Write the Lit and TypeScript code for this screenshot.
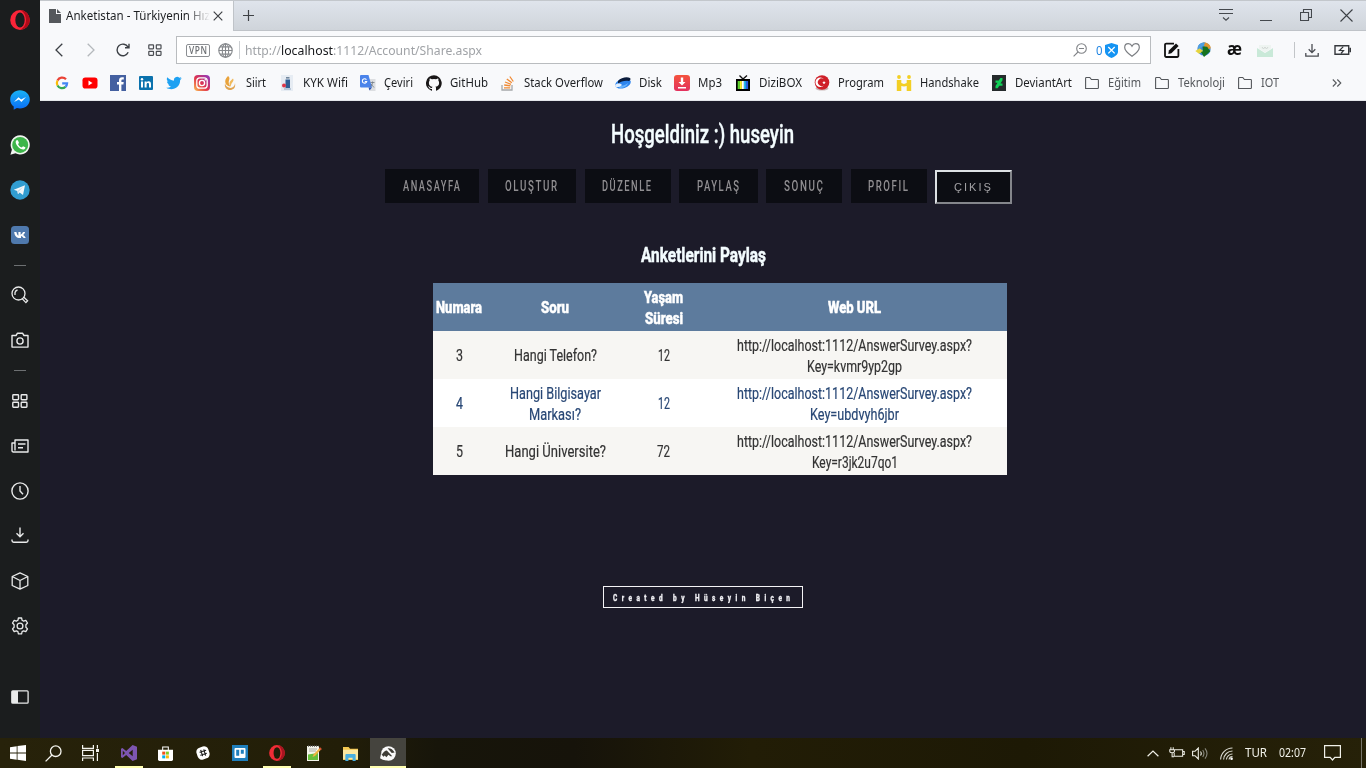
import { LitElement, html, svg, css, TemplateResult, SVGTemplateResult } from "lit";
import { customElement, property, query } from "lit/decorators.js";

type Glyph = { box: string; body: SVGTemplateResult };

const operaBody = (a: string, b: string) => svg`
  <ellipse cx="10" cy="10" rx="9.8" ry="9.9" fill=${a}/>
  <path d="M10 0.1a9.8 9.9 0 0 1 0 19.8c3-1 6-5 6-9.900s-3-9-6-9.900z" fill=${b}/>`;

const GLYPHS: Record<string, Glyph> = {
  opera: { box: "0 0 20 20", body: svg`${operaBody("#fb2438", "#b00a18")}<ellipse cx="10" cy="10" rx="4.700" ry="7.400" fill="#1b1d1e"/>` },
  operaTask: { box: "0 0 20 20", body: svg`${operaBody("#f02c36", "#a81420")}<ellipse cx="10" cy="10" rx="4.300" ry="7.300" fill="#211d08"/>` },
  messenger: { box: "0 0 20 20", body: svg`
    <defs><linearGradient id="m" x2="0" y2="1"><stop stop-color="#19b2f5"/><stop offset="1" stop-color="#0a6cf5"/></linearGradient></defs>
    <path d="M10 .3C4.500.3.200 4.300.200 9.500c0 3 1.300 5.400 3.500 7v3.300l3.200-1.700c1 .3 2 .4 3.100.4 5.500 0 9.800-4 9.800-9S15.500.3 10 .3z" fill="url(#m)"/>
    <path d="M4 12l4.500-4.800 2.600 2.400L16 7l-4.600 4.900-2.500-2.400z" fill="#fff"/>` },
  whatsapp: { box: "0 0 20 20", body: svg`
    <path d="M10.200.3A9.600 9.600 0 0 0 1.900 14.700L.4 19.700l5.100-1.400A9.600 9.600 0 1 0 10.200.3z" fill="#f1f5f0"/>
    <circle cx="10.200" cy="9.900" r="8" fill="#3db54a"/>
    <path d="M7 5c-2 1-1.600 3.600.6 6.200s5 3.900 6.700 3.100c1-.5 1.200-1.400 1-2l-2.300-1.100-1.200 1.300C10 12 8.500 10.500 8 9l1-1-1-2.600z" fill="#fff"/>` },
  telegram: { box: "0 0 20 20", body: svg`
    <circle cx="10" cy="10" r="9.700" fill="#319dd1"/>
    <path d="M3.800 9.800L15 5.300 13 15l-3.400-2.500L8 14.200l-.7-3.200z" fill="#f2f8fb"/><path d="M7.300 11l6-4.200-4.600 5L8 14.200z" fill="#c3d9e6"/>` },
  vk: { box: "0 0 18 18", body: svg`
    <rect width="18" height="18" rx="3.500" fill="#4f79ad"/>
    <path d="M2.800 6h2.200c.4 2 1.200 3.300 2 3.700V6h2.200v2.700C10 8.400 11 7.400 11.600 6h2.100c-.3 1.300-1.200 2.400-2 3 .9.500 1.900 1.400 2.700 3h-2.300c-.6-1-1.500-1.900-2.500-2V12H8.500C5.300 12 3.200 10 2.800 6z" transform="translate(.4 0)" fill="#fff"/>` },
  search: { box: "0 0 18 18", body: svg`<g fill="none" stroke="#e9eaea" stroke-width="1.300"><circle cx="7.500" cy="7.500" r="6.500"/><path d="M4 9V6.500A3.500 3.500 0 0 1 6.500 4M12.600 11l4 3.800-1.700 1.800-3.800-4"/></g>` },
  camera: { box: "0 0 18 16", body: svg`<g fill="none" stroke="#e9eaea" stroke-width="1.400"><path d="M1 3.500h4L6.500 1.200h5L13 3.500h4v11.600H1z" stroke-linejoin="round"/><circle cx="9" cy="9" r="3.100"/></g>` },
  speed: { box: "0 0 16 14", body: svg`<g fill="none" stroke="#e9eaea" stroke-width="1.400"><rect x=".8" y=".8" width="5.700" height="5" rx=".7"/><rect x="9.200" y=".8" width="5.700" height="5" rx=".7"/><rect x=".8" y="8.300" width="5.700" height="5" rx=".7"/><rect x="9.200" y="8.300" width="5.700" height="5" rx=".7"/></g>` },
  news: { box: "0 0 18 14", body: svg`<g fill="none" stroke="#e9eaea" stroke-width="1.400" stroke-linejoin="round"><path d="M4 1h13v12H2.200A1.400 1.400 0 0 1 1 11.500V4h3zM4 4v7.500M7 5h7.500M7 8.700h5"/></g>` },
  clock: { box: "0 0 18 18", body: svg`<g fill="none" stroke="#e9eaea" stroke-width="1.400"><circle cx="9" cy="9" r="8.100"/><path d="M9 4v5l3 3.300"/></g>` },
  download: { box: "0 0 18 16", body: svg`<g fill="none" stroke="#e9eaea" stroke-width="1.400"><path d="M9 .5v9.200M5.500 6.300L9 9.700l3.500-3.400M1 12.500v1q0 1.700 1.700 1.700h12.600q1.700 0 1.700-1.700v-1"/></g>` },
  cube: { box: "0 0 18 18", body: svg`<path d="M9 .9l7.800 3.600v9L9 17.200 1.200 13.500v-9zM1.200 4.500L9 8.500l7.800-4M9 8.500v8.700" fill="none" stroke="#e9eaea" stroke-width="1.300" stroke-linejoin="round"/>` },
  gear: { box: "0 0 18 18", body: svg`<g fill="none" stroke="#e9eaea" stroke-width="1.300" stroke-linejoin="round"><path d="M7.400 1h3.200l.5 2.300 1.500.8 2.200-.8 1.700 2.700-1.600 1.700v2.500l1.600 1.700-1.700 2.700-2.200-.8-1.500.8-.5 2.300H7.400l-.5-2.300-1.500-.8-2.200.8-1.700-2.700 1.600-1.700V7.700L1.500 6l1.700-2.700 2.200.8 1.500-.8z"/><circle cx="9" cy="9" r="2.900"/></g>` },
  panel: { box: "0 0 18 14", body: svg`<rect x=".8" y=".8" width="16.300" height="12.400" rx="1" fill="none" stroke="#e9eaea" stroke-width="1.300"/><path d="M1 1h6v12H1z" fill="#e9eaea"/>` },

  page: { box: "0 0 12 14", body: svg`<path d="M0 0h7v5h5v9H0z" fill="#55585c"/><path d="M8 0l4 4H8z" fill="#55585c"/>` },
  close: { box: "0 0 10 10", body: svg`<path d="M.7.7l8.600 8.600M9.300.7L.7 9.300" stroke="#3e4145" stroke-width="1.200"/>` },
  plus: { box: "0 0 11 11", body: svg`<path d="M5.500 0v11M0 5.500h11" stroke="#3e4145" stroke-width="1.200"/>` },
  tabMenu: { box: "0 0 14 12", body: svg`<path d="M0 .5h14M0 4.500h14M4 8.500l3 2.700 3-2.700" fill="none" stroke="#44484d" stroke-width="1.100"/>` },
  minimise: { box: "0 0 12 12", body: svg`<path d="M0 11.500h12" stroke="#44484d"/>` },
  restore: { box: "0 0 12 12", body: svg`<path d="M.5 3.500h8v8h-8zM3.500 3V.5h8v8H9" fill="none" stroke="#44484d" stroke-width="1.100"/>` },
  winClose: { box: "0 0 13 13", body: svg`<path d="M.5.5l12 12M12.500.5l-12 12" stroke="#3c4045" stroke-width="1.100"/>` },

  back: { box: "0 0 8 14", body: svg`<path d="M7.300.7L1 7l6.300 6.300" fill="none" stroke="#3c4045" stroke-width="1.300"/>` },
  forward: { box: "0 0 8 14", body: svg`<path d="M.7.700L7 7 .7 13.300" fill="none" stroke="#b4b8bc" stroke-width="1.300"/>` },
  reload: { box: "0 0 14 14", body: svg`<path d="M12.200 9.300A5.800 5.800 0 1 1 12 4.200M13 .8v3.900H9" fill="none" stroke="#3c4045" stroke-width="1.400"/>` },
  gridDark: { box: "0 0 14 12", body: svg`<g fill="none" stroke="#4a4d52" stroke-width="1.200"><rect x=".8" y=".8" width="4.700" height="4" rx=".5"/><rect x="8.300" y=".8" width="4.700" height="4" rx=".5"/><rect x=".8" y="7.300" width="4.700" height="4" rx=".5"/><rect x="8.300" y="7.300" width="4.700" height="4" rx=".5"/></g>` },
  globe: { box: "0 0 15 15", body: svg`<g fill="none" stroke="#85888c" stroke-width="1.100"><circle cx="7.500" cy="7.500" r="6.700"/><ellipse cx="7.500" cy="7.500" rx="3.200" ry="6.700"/><path d="M.8 7.500h13.400M7.500.800v13.400M2 3.900h11M2 11.100h11" /></g>` },
  zoomOut: { box: "0 0 14 14", body: svg`<g fill="none" stroke="#808387" stroke-width="1.100"><circle cx="8.500" cy="5.500" r="4.800"/><path d="M5 9L.6 13.400M6 5.500h5"/></g>` },
  shield: { box: "0 0 13 15" , body: svg`<path d="M6.500 0l6.500 2v6.500c0 3.500-3.500 5.300-6.500 6.500C3.500 13.800 0 12 0 8.500V2z" fill="#1594f3"/><path d="M3.300 4l6.400 6.400M9.700 4l-6.400 6.400" stroke="#fff" stroke-width="1.300"/>` },
  heart: { box: "0 0 16 14", body: svg`<path d="M8 13.300C5 11 .7 8 .7 4.400.7 2.300 2.300.7 4.300.7 5.900.700 7.300 1.700 8 3.200 8.700 1.700 10.100.7 11.700.7c2 0 3.600 1.600 3.600 3.700C15.300 8 11 11 8 13.300z" fill="none" stroke="#7b7e82" stroke-width="1.200"/>` },
  edit: { box: "0 0 16 16", body: svg`<path d="M10 1.600H2.200A1.200 1.200 0 0 0 1 2.800v11a1.200 1.200 0 0 0 1.200 1.200h11a1.200 1.200 0 0 0 1.200-1.200V7" fill="none" stroke="#111" stroke-width="1.800"/><path d="M4.300 12l.6-3.400L12 1.500l2.600 2.600-7.200 7.200z" fill="#111"/>` },
  idm: { box: "0 0 16 16", body: svg`<circle cx="9" cy="7" r="6.600" fill="#3a86d8"/><path d="M8 .6c4-.8 8 2.400 7.700 6L13 7 8 3z" fill="#e0952f"/><path d="M2.700 5C4 2 7 .2 10 .700L8.500 4.500 3 7z" fill="#4f9fe0"/><path d="M.3 9l4.500-2.800 3.700 3-4.500 2.600z" fill="#e6d43c"/><path d="M7.500 4.500l4.700.3 2 3.200 1.300 1-6.500 6L6 10l2-.8z" fill="#16731f"/>` },
  mail: { box: "0 0 16 14", body: svg`<path d="M0 5l8 5 8-5v9H0z" fill="#c9e9d8"/><path d="M2 5.500V2h12v3.500L8 9.500z" fill="#eef4f1"/><path d="M5 4l1.500 2L8 4l1.500 2L11 4" fill="none" stroke="#d3d8d5"/>` },
  downDark: { box: "0 0 14 13", body: svg`<path d="M7 0v8.500M3.700 5.300L7 8.600l3.300-3.300M.8 9v3.200h12.400V9" fill="none" stroke="#4a4d52" stroke-width="1.300"/>` },
  battery: { box: "0 0 18 10", body: svg`<path d="M1 .8h13.700v8.400H1z" fill="none" stroke="#35383c" stroke-width="1.400"/><path d="M15.400 2.700H17v4.600h-1.600z" fill="#35383c"/><path d="M9.300 1.700L5.500 5.500h4L7 8.500" fill="none" stroke="#35383c" stroke-width="1.200"/>` },

  google: { box: "0 0 16 16", body: svg`<g fill="none" stroke-width="2.200"><path d="M12 4.300A5.200 5.200 0 0 0 3.500 5.500" stroke="#ea4335"/><path d="M3.500 5.500a5.200 5.200 0 0 0 0 5" stroke="#fbbc05"/><path d="M3.500 10.500a5.200 5.200 0 0 0 8 1.400" stroke="#34a853"/><path d="M11.500 11.900A5.200 5.200 0 0 0 13.100 8.300H8.200" stroke="#4285f4"/></g>` },
  youtube: { box: "0 0 16 16", body: svg`<rect x=".5" y="2.500" width="15" height="11" rx="2.800" fill="#f00"/><path d="M6.500 5.500v5L10.500 8z" fill="#fff"/>` },
  facebook: { box: "0 0 16 16", body: svg`<path d="M0 0h16v16H0z" fill="#4460a0"/><path d="M9 16V9.500H7V7h2V5.300c0-2 1.200-3 3-3h1.800v2.300h-1.300c-.8 0-1.100.4-1.100 1.100V7h2.300l-.3 2.500h-2V16z" fill="#fff"/>` },
  linkedin: { box: "0 0 16 16", body: svg`<rect x="1" y="1" width="14" height="14" rx="1" fill="#0b72ad"/><path d="M3 6.500h2v6H3zM6.600 6.500h2v.9C9 6.700 9.700 6.300 10.600 6.300c1.800 0 2.400 1.200 2.400 2.900v3.300h-2V9.500c0-.8-.2-1.500-1.100-1.500s-1.300.7-1.300 1.500v3h-2z" fill="#fff"/><circle cx="4" cy="4.300" r="1.200" fill="#fff"/>` },
  twitter: { box: "0 0 24 24", body: svg`<path d="M23.600 4.900c-.9.400-1.800.6-2.700.8 1-.6 1.700-1.500 2.100-2.600-.9.500-1.900.9-3 1.100a4.800 4.800 0 0 0-8.100 4.300C7.900 8.300 4.300 6.400 2 3.500a4.700 4.700 0 0 0 1.500 6.300c-.8 0-1.500-.2-2.100-.6 0 2.300 1.600 4.200 3.800 4.700-.7.200-1.400.2-2.100.1.600 1.900 2.400 3.200 4.400 3.300A9.600 9.600 0 0 1 .4 19.200C10 25 21.500 18.500 21.200 7.400c.9-.700 1.700-1.500 2.400-2.500z" fill="#1da1f2"/>` },
  instagram: { box: "0 0 16 16", body: svg`<defs><linearGradient id="ig" x1="0" y1="1" x2="1" y2="0"><stop stop-color="#fdc04f"/><stop offset=".45" stop-color="#e0344c"/><stop offset="1" stop-color="#8a3ac8"/></linearGradient></defs><rect width="16" height="16" rx="4" fill="url(#ig)"/><g fill="none" stroke="#fff" stroke-width="1.300"><rect x="2.800" y="2.800" width="10.400" height="10.400" rx="3"/><circle cx="8" cy="8" r="2.600"/></g><circle cx="11.300" cy="4.700" r=".8" fill="#fff"/>` },
  siirt: { box: "0 0 16 16", body: svg`<path d="M6 1c4 3-2 5 2.500 10.500C4 11.500.5 6 6 1z" fill="#e9a33b"/><path d="M11 3.500c2 3-2.500 4-2 8C6 8.500 8 6 11 3.500z" fill="#f0b95a"/><path d="M3 8.500c1 3 3 4 5.500 4.500C11 12.500 13 11 13 8c1 5-2 7-5 7s-6-2.500-5-6.500z" fill="#e0a450"/>` },
  kyk: { box: "0 0 16 16", body: svg`<path d="M2 0h12v16H2z" fill="#e6ecf3"/><path d="M6.500 4.500h4.500v8.500H6.500z" fill="#315f93"/><path d="M7 2h3.500v1.600H7z" fill="#72879c"/><circle cx="5" cy="10.500" r="2" fill="#dd3648"/><path d="M5 14h7" stroke="#8fa6bf"/>` },
  translate: { box: "0 0 16 16", body: svg`<path d="M7 4h8.500v12H10z" fill="#dcdee1"/><path d="M1 0h7.500l3.500 12.500H1q-1 0-1-1V1q0-1 1-1z" fill="#4a83ea"/><path d="M8.500 12.500h3.500l-2.500 3z" fill="#2e57b6"/><path d="M6.400 4.700A2.200 2.200 0 1 0 6.700 6.500H4.800" fill="none" stroke="#fff" stroke-width="1.100"/><path d="M10.500 7.500h4M12.500 6.500v1c0 2-1 3-2 4M11 9l3 3.500" fill="none" stroke="#6f7983" stroke-width=".8"/>` },
  github: { box: "0 0 16 16", body: svg`<path fill-rule="evenodd" fill="#191717" d="M8 .2a8 8 0 0 0-2.500 15.600c.4.100.5-.2.500-.4v-1.500c-2.200.5-2.700-.9-2.700-.9-.4-.9-.9-1.200-.9-1.200-.7-.5.100-.5.100-.5.800.1 1.200.8 1.200.8.700 1.200 1.900.9 2.300.7.100-.5.300-.9.500-1.100-1.800-.2-3.600-.9-3.600-4 0-.9.300-1.600.8-2.100-.1-.2-.4-1 .1-2.100 0 0 .7-.2 2.200.8a7.700 7.700 0 0 1 4 0c1.500-1 2.200-.8 2.200-.8.4 1.100.2 1.900.1 2.100.5.600.8 1.300.8 2.100 0 3.100-1.900 3.700-3.700 3.900.3.300.6.800.6 1.500v2.200c0 .2.100.5.500.4A8 8 0 0 0 8 .2z"/>` },
  stack: { box: "0 0 16 16", body: svg`<path d="M2 10v5h10v-5" fill="none" stroke="#a5a8ab" stroke-width="1.300"/><g stroke="#f08a34" stroke-width="1.300"><path d="M4 12.800h6.200M4.200 10l6.200.8M5 7l6 2.300M6.800 4l5 3.800M9.800 1.500l3.500 5"/></g>` },
  disk: { box: "0 0 16 16", body: svg`<ellipse cx="8" cy="8.500" rx="8" ry="4.700" transform="rotate(-18 8 8.500)" fill="#2d85ee"/><path d="M3 6c3-3.500 9-4.500 12-3 1 1.200.5 2-1 3C10 5 6 6.500 3 8.500z" fill="#0b1c3c"/><path d="M1 10c2 1.500 9 1 12-2-1 4-5 5-8 5z" fill="#68b4ff"/><path d="M0 10.500c1.500-2.500 5-2.500 7-.5-2 2-5 2.500-6 2z" fill="#e4f1ff"/>` },
  mp3: { box: "0 0 16 16", body: svg`<defs><linearGradient id="mp" x2="0" y2="1"><stop stop-color="#f4533d"/><stop offset="1" stop-color="#e3315e"/></linearGradient></defs><rect width="16" height="16" rx="3" fill="url(#mp)"/><path d="M6.800 2.500h2.400V7H11.500L8 10.500 4.500 7h2.300zM4 12h8v1.400H4z" fill="#fff"/>` },
  dizi: { box: "0 0 16 16", body: svg`<path d="M4.500.5L8 4l4-3.500" fill="none" stroke="#111" stroke-width="1.300"/><path d="M1 4h14v12H1z" fill="#000"/><path d="M2.700 6h2.200v8H2.700z" fill="#5ed72f"/><path d="M4.900 6h2v8h-2z" fill="#f5ee2a"/><path d="M6.900 6h2v8h-2z" fill="#fff"/><path d="M8.900 6h2v8h-2z" fill="#28bdf0"/><path d="M10.900 6h2.200v8h-2.200z" fill="#255be0"/>` },
  program: { box: "0 0 16 16", body: svg`<ellipse cx="8" cy="13.500" rx="6.500" ry="2" fill="#c9b9b9"/><circle cx="8" cy="7.500" r="7.300" fill="#cf2029"/><path d="M10 4.300A3.800 3.800 0 1 0 10 10.300 4.800 4.800 0 1 1 10 4.300z" fill="#fff"/><path d="M10 5.800l.5 1.100 1.200.2-.9.800.2 1.200-1-.6-1 .6.200-1.200-.9-.8 1.200-.2z" fill="#fff"/>` },
  hands: { box: "0 0 16 16", body: svg`<g fill="#f3cf24"><circle cx="3" cy="2" r="1.900"/><circle cx="13" cy="2" r="1.900"/><path d="M.8 5h4.500v3l2.700 1 2.700-1V5h4.500v11h-4.500v-5L8 11.500 5.300 11v5H.8z"/></g>` },
  deviant: { box: "0 0 16 16", body: svg`<path d="M1 0h14v16H1z" fill="#252b2c"/><path d="M11.500 3v2.300L9.500 8.500h2v2.300H8.300L6.700 13.300H4.500V11l2-3.200h-2V5.500h3.300L9.400 3z" fill="#11d157"/>` },
  folder: { box: "0 0 16 16", body: svg`<path d="M1.600 13.500V3.300q0-.8.8-.8h3.400l1.600 2h6.200q.8 0 .8.800v7.400q0 .8-.8.800z" fill="none" stroke="#54575b" stroke-width="1.100"/>` },
  more: { box: "0 0 10 8", body: svg`<path d="M.8.5L4.300 4 .8 7.500M5.300.5L8.800 4 5.300 7.500" fill="none" stroke="#55585c" stroke-width="1.100"/>` },

  windows: { box: "0 0 16 16", body: svg`<path d="M0 2.200l6.700-1v6.300H0zM7.500 1.100L16 0v7.500H7.500zM0 8.400h6.700v6.300L0 13.800zM7.500 8.400H16V16l-8.500-1.200z" fill="#fff"/>` },
  taskSearch: { box: "0 0 17 17", body: svg`<g fill="none" stroke="#f4f4ee" stroke-width="1.300"><circle cx="10.700" cy="6.200" r="5.300"/><path d="M7 10L.6 16.400"/></g>` },
  taskView: { box: "0 0 17 16", body: svg`<g fill="none" stroke="#f4f4ee" stroke-width="1.200"><path d="M.6 0v3.300h10.800V0M.6 16v-3h10.800v3M.6 5.400h10.800v5.300H.6zM15.400 0v3.500M15.400 8v8"/><path d="M14 4h3v3h-3z" fill="#f4f4ee" stroke="none"/></g>` },
  vs: { box: "0 0 16 16", body: svg`<path d="M11.600 0L16 1.800v12.400L11.600 16 5.200 9.900 1.400 13 0 12.300V3.700L1.400 3l3.800 3.100zM11.700 4.800L7.700 8l4 3.200zM1.800 5.800v4.400L4 8z" fill="#7d55b0" fill-rule="evenodd"/>` },
  store: { box: "0 0 16 16", body: svg`<path d="M0 4h16v10.500q0 1.500-1.500 1.500h-13Q0 16 0 14.500z" fill="#fff"/><path d="M5 4.500V1h6v3.500" fill="none" stroke="#fff" stroke-width="1.100"/><path d="M4.500 6h3.200v3.200H4.500z" fill="#f1511b"/><path d="M8.400 6h3.200v3.200H8.400z" fill="#80cc28"/><path d="M4.500 10h3.200v3.200H4.500z" fill="#00adef"/><path d="M8.400 10h3.200v3.200H8.400z" fill="#fbbc09"/>` },
  slack: { box: "0 0 14 14", body: svg`<rect x=".8" y=".8" width="12.400" height="12.400" rx="4.500" transform="rotate(-18 7 7)" fill="#fff"/><path d="M4.700 3.800l1.900 6.400M7.800 3.300l1.800 6.300M3.500 6.300l6.600-2M4.200 9.200l6.600-2" stroke="#222" stroke-width="1.200"/>` },
  trello: { box: "0 0 16 16", body: svg`<path d="M0 0h16v16H0z" fill="#1f7fbd"/><rect x="2.500" y="3" width="11" height="10" rx="1" fill="#fff"/><path d="M4.200 4.700h3v6h-3zM8.800 4.700h3v4h-3z" fill="#1f7fbd"/>` },
  notepad: { box: "0 0 16 16", body: svg`<path d="M1 1h12v15H1z" fill="#f3f4ea"/><path d="M2 9.500l10-1.500v7H2z" fill="#66bf3b"/><path d="M2 1h10.500" stroke="#555" stroke-width="1.600" stroke-dasharray="1 1"/><path d="M3 4h8M3 6h7" stroke="#9a9a95" stroke-width=".8"/><path d="M6.500 12l1-2.500L14 2.500 15.500 4 9 11z" fill="#efb440"/><path d="M13 3.500L14 2.300 15.700 4l-1 1.200z" fill="#d84c35"/>` },
  explorer: { box: "0 0 18 16" , body: svg`<path d="M1 1h6l1.500 2H17v12H1z" fill="#f3c850"/><path d="M1 4h16v10H1z" fill="#fbe7a1"/><path d="M3.500 16V9.500q0-1 1-1h9q1 0 1 1V16h-3.300v-3.500H6.800V16z" fill="#49aee0"/>` },
  gnome: { box: "0 0 18 16", body: svg`<circle cx="9" cy="8" r="7.800" fill="#fafafa"/><path d="M2 9c2-3 4-4.500 5.500-4L13 11h-2L9 9.300 6.700 12 5 10l-2.700 3z" fill="#3e3d36"/><path d="M8 2.500c3-.5 5.500 1 7.500 4.500l-3 .5z" fill="#3e3d36"/><path d="M1 8.500L0 13q4 3 7 2z" fill="#fafafa"/>` },
  chevron: { box: "0 0 12 7", body: svg`<path d="M.6 6.300L6 1l5.400 5.300" fill="none" stroke="#f0f0e8" stroke-width="1.200"/>` },
  taskBattery: { box: "0 0 17 12", body: svg`<g fill="none" stroke="#f0f0e8" stroke-width="1.100"><path d="M6 2.500h8.500v7H5.500V6M14.500 4.500h1.700v3h-1.700M2 0v2.500M4.500 0v2.500M.8 2.500h5v1.700q0 1.500-2.500 1.500T.8 4.200zM3.300 6v4h2"/></g>` },
  volume: { box: "0 0 17 13", body: svg`<g fill="none" stroke="#f0f0e8" stroke-width="1.100"><path d="M.6 4.300H3L6.300 1v11L3 8.700H.6zM8.500 4.500q1.500 2 0 4"/><g stroke="#88877c"><path d="M10.700 3q2.500 3.500 0 7M13 1.300q4 5.200 0 10.400"/></g></g>` },
  wifi: { box: "0 0 13 13", body: svg`<g fill="none" stroke="#d9d9d0" stroke-width="1.100"><path d="M.6 12.500A12 12 0 0 1 12.500 1M3.600 12.500a9 9 0 0 1 8.900-8.500M6.400 12.500A6 6 0 0 1 12.500 7M9 12.500A3.500 3.500 0 0 1 12.500 9.600"/></g><circle cx="11.600" cy="11.700" r="1.300" fill="#fff"/>` },
  notify: { box: "0 0 17 16", body: svg`<path d="M.6.6h15.800v11.800h-5.600L8.500 15l-2.300-2.600H.6z" fill="none" stroke="#f0f0e8" stroke-width="1.200"/>` },
};

const glyph = (name: string, width: number, height = width): TemplateResult =>
  html`<svg class="glyph" width=${width} height=${height} viewBox=${GLYPHS[name].box}>${GLYPHS[name].body}</svg>`;

/** Single line of text condensed or widened to an exact width. */
@customElement("fit-text")
class FitText extends LitElement {
  static styles = css`
    :host { display: inline-block; white-space: nowrap; flex: none; text-align: left; vertical-align: top; }
    .line { display: inline-block; transform-origin: 0 50%; }
  `;
  @property({ type: Number }) span = 0;
  @property() text = "";
  @query(".line") line!: HTMLElement;

  updated() {
    const spacing = parseFloat(getComputedStyle(this.line).letterSpacing) || 0;
    this.line.style.transform = "none";
    const natural = this.line.getBoundingClientRect().width - spacing;
    this.style.width = `${this.span}px`;
    this.line.style.transform = `scaleX(${this.span / natural})`;
  }

  render() {
    return html`<span class="line">${this.text}</span>`;
  }
}

const fit = (text: string, span: number) => html`<fit-text .text=${text} .span=${span}></fit-text>`;

const SIDEBAR: [string, number, number, number][] = [
  ["messenger", 20, 20, 45], ["whatsapp", 20, 20, 45], ["telegram", 20, 20, 45], ["vk", 18, 18, 45],
  ["-", 0, 0, 16], ["search", 18, 18, 44.5], ["camera", 18, 16, 44.5], ["-", 0, 0, 16.5],
  ["speed", 16, 14, 45], ["news", 18, 14, 45], ["clock", 18, 18, 44.5], ["download", 18, 16, 44.5],
  ["cube", 18, 18, 46], ["gear", 18, 18, 45],
];

/* icon, label, label width, full item width */
const BOOKMARKS: [string, string, number, number][] = [
  ["google", "", 0, 28], ["youtube", "", 0, 28], ["facebook", "", 0, 28], ["linkedin", "", 0, 28],
  ["twitter", "", 0, 28], ["instagram", "", 0, 28], ["siirt", "Siirt", 20, 57], ["kyk", "KYK Wifi", 45, 81],
  ["translate", "Çeviri", 29, 66], ["github", "GitHub", 38, 74], ["stack", "Stack Overflow", 79, 115],
  ["disk", "Disk", 23, 59], ["mp3", "Mp3", 24, 61], ["dizi", "DiziBOX", 43, 79], ["program", "Program", 46, 82],
  ["hands", "Handshake", 59, 95], ["deviant", "DeviantArt", 57, 93], ["folder", "Eğitim", 33, 70],
  ["folder", "Teknoloji", 47, 83], ["folder", "IOT", 18, 60],
];

/* label, label width, button width */
const NAV: [string, number, number][] = [
  ["ANASAYFA", 57, 94], ["OLUŞTUR", 52, 88.5], ["DÜZENLE", 49, 86],
  ["PAYLAŞ", 42, 78.5], ["SONUÇ", 39, 76], ["PROFIL", 40, 76],
];

const URL_LINE: [string, number] = ["http://localhost:1112/AnswerSurvey.aspx?", 235];
const HEAD: [string, number][][] = [[["Numara", 46]], [["Soru", 28]], [["Yaşam", 39], ["Süresi", 38]], [["Web URL", 53]]];
const ROWS: [string, number][][][] = [
  [[["3", 7]], [["Hangi Telefon?", 83]], [["12", 12]], [URL_LINE, ["Key=kvmr9yp2gp", 95]]],
  [[["4", 7]], [["Hangi Bilgisayar", 91], ["Markası?", 52]], [["12", 12]], [URL_LINE, ["Key=ubdvyh6jbr", 89]]],
  [[["5", 7]], [["Hangi Üniversite?", 101]], [["72", 13]], [URL_LINE, ["Key=r3jk2u7qo1", 86]]],
];

/* icon, width, height, cell width, state */
const TASKS: [string, number, number, number, string][] = [
  ["windows", 16, 16, 36, ""], ["taskSearch", 17, 17, 36, "nudge"], ["taskView", 17, 16, 38.5, "nudge"],
  ["vs", 16, 16, 37, "open"], ["store", 15, 15, 37, "nudge"], ["slack", 14, 14, 37, ""], ["trello", 16, 16, 37, ""],
  ["operaTask", 16, 16, 37, "open"], ["notepad", 16, 16, 37, ""], ["explorer", 17, 15, 37.5, "nudge"],
  ["gnome", 17, 15, 36, "active"],
];

@customElement("app-root")
class AppRoot extends LitElement {
  static styles = css`
    :host { display: flex; flex-direction: column; width: 1366px; height: 768px; overflow: hidden; font: 12px "Noto Sans", "Open Sans", sans-serif; color: #1d1f22; }
    * { box-sizing: border-box; }
    .glyph { display: block; flex: none; }
    .cell { display: flex; align-items: center; justify-content: center; flex: none; }
    .upper { display: flex; height: 738px; }

    .side { width: 40px; background: #1b1d1e; display: flex; flex-direction: column; flex: none; }
    .brand { height: 40px; margin-bottom: 37px; }
    .rule { width: 12px; height: 1px; background: #6d7072; }
    .side .last { height: 45px; margin-top: 26px; }

    .browser { flex: 1; display: flex; flex-direction: column; min-width: 0; }
    .tabs { height: 31px; display: flex; background: linear-gradient(#dfe4ec, #cfd4da); border-top: 1px solid #c3c7cc; border-bottom: 1px solid #bfc3c8; }
    .tab { width: 194px; height: 31px; background: #f8f9fb; border-right: 1px solid #bfc3c8; display: flex; align-items: center; padding: 0 10px 1px 9px; }
    .title { width: 145px; margin: 0 3px 0 5px; line-height: 18px; -webkit-mask-image: linear-gradient(90deg, #000 120px, transparent 144px); mask-image: linear-gradient(90deg, #000 120px, transparent 144px); }
    .new { width: 29px; padding-bottom: 1px; }
    .controls { margin-left: auto; display: flex; }
    .controls .cell { width: 40px; padding-bottom: 1px; }

    .tools { height: 38px; background: #f8f9fb; display: flex; align-items: center; padding-left: 3px; }
    .nav-cell { width: 32px; height: 38px; padding-right: 1px; }
    .address { width: 975px; height: 28px; margin-left: 5px; border: 1px solid #b9bcbf; background: #fff; display: flex; align-items: center; padding-left: 9px; }
    .vpn { width: 24px; height: 13px; border: 1px solid #8b8e92; border-radius: 2px; font: 600 10px/11px "Open Sans", sans-serif; color: #6d7074; display: flex; justify-content: center; letter-spacing: .7px; margin-right: 8px; }
    .split { width: 1px; height: 18px; background: #cdd0d3; margin: 0 5px 0 6px; }
    .url { font-size: 13px; line-height: 20px; color: #a0a3a7; display: flex; }
    .url .host { color: #17191c; }
    .badges { margin-left: auto; display: flex; align-items: center; padding-right: 10px; }
    .count { font-size: 13px; line-height: 20px; color: #1c83e2; margin: 0 3px 0 9px; }
    .heart { margin-left: 6px; }
    .ext { width: 31px; height: 38px; }
    .first { margin-left: 5.5px; }
    .ae { font: 700 18px/20px "Open Sans", sans-serif; letter-spacing: -1px; color: #111; padding-bottom: 4px; }
    .bar { width: 1px; height: 16px; background: #c2c5c8; margin: 0 2px 0 13px; }

    .marks { height: 32px; background: #f8f9fb; border-bottom: 1px solid #e4e6ea; display: flex; padding: 0 0 3px 14px; align-items: center; }
    .mark { display: flex; align-items: center; gap: 8px; flex: none; line-height: 18px; }
    .mark.dim { color: #55585c; }
    .more { margin-left: 35px; }

    .page { flex: 1; background: #1c1b29; display: flex; flex-direction: column; align-items: center; font-family: Roboto, sans-serif; }
    .welcome { margin: 17px 1px 0 0; font-size: 25px; line-height: 33px; height: 32px; color: #f4fdff; font-weight: 500; -webkit-text-stroke: .4px; }
    .menu { display: flex; margin: 19px 9px 0 0; width: 627px; gap: 8.5px; }
    .btn { height: 34px; background: #0c0d13; color: #918f92; font-size: 14px; font-weight: 500; letter-spacing: 2.300px; line-height: 34px; text-align: center; padding-right: 1.500px; flex: none; }
    .out { margin-top: 1px; width: 77px; border: 2px solid; border-color: #dde1e4 #84868b #84868b #dde1e4; line-height: 30px; font-family: "Liberation Sans", Arial, sans-serif; font-size: 11px; font-weight: 400; letter-spacing: 2px; color: #a2a1a4; }
    .sub { margin-top: 38px; font-size: 19.500px; line-height: 27px; height: 26px; font-weight: 700; color: #f4fdff; -webkit-text-stroke: .5px; }
    .table { width: 574px; margin: 15px 0 0 34px; display: flex; flex-direction: column; flex: none; }
    .row { display: grid; grid-template-columns: 53px 139px 78px 304px; height: 48px; font-size: 16.300px; line-height: 21px; background: #f7f6f3; color: #333; -webkit-text-stroke: .2px; }
    .row.alt { background: #fff; color: #284775; }
    .row.head { background: #5d7b9d; color: #fff; font-weight: 800; font-size: 16px; -webkit-text-stroke: .5px; }
    .td { display: flex; flex-direction: column; align-items: center; justify-content: center; height: 48px; padding: 1px 1px 0 0; }
    .credit { margin-top: 111px; width: 200px; height: 22px; border: 1px solid #f4f4f6; color: #f2f2f6; font-size: 9.500px; font-weight: 800; letter-spacing: 6.500px; line-height: 21px; padding-left: 9px; flex: none; -webkit-text-stroke: .3px; }

    .taskbar { height: 30px; background: linear-gradient(90deg, #27220a, #221e08 25%, #17150a 32%, #16130a 42%, #221d06 55%, #1d1905 75%, #262108); display: flex; color: #f1f1e9; }
    .task { height: 30px; border-bottom: 2px solid transparent; padding-top: 2px; }
    .nudge { padding-right: 2px; }
    .open { background: linear-gradient(#ffffb0, #ffffb0) 50% 100% / 28px 2px no-repeat; background-origin: border-box; background-clip: border-box; }
    .active { background: #45443e; border-bottom-color: #ffffb0; }
    .tray { margin-left: auto; display: flex; align-items: center; font-size: 12px; line-height: 18px; }
    .t7 { margin-right: 7px; }
    .t10 { margin-right: 10px; }
    .t11 { margin-right: 11px; }
    .t12 { margin-right: 12px; }
    .t18 { margin-right: 18px; }
    .t20 { margin-right: 20px; }
    .edge { width: 5px; height: 30px; border-left: 1px solid #77756a; }
  `;

  private lines(lines: [string, number][]) {
    return html`<div class="td">${lines.map(([t, w]) => fit(t, w))}</div>`;
  }

  private sidebar() {
    return html`<div class="side">
      <div class="cell brand">${glyph("opera", 20)}</div>
      ${SIDEBAR.map(([name, w, h, cell]) => html`<div class="cell" style="height:${cell}px">
        ${name === "-" ? html`<div class="rule"></div>` : glyph(name, w, h)}</div>`)}
      <div class="cell last">${glyph("panel", 18, 14)}</div>
    </div>`;
  }

  private chrome() {
    return html`
      <div class="tabs">
        <div class="tab">${glyph("page", 12, 14)}<div class="title">${fit("Anketistan - Türkiyenin Hız", 144)}</div>${glyph("close", 10)}</div>
        <div class="cell new">${glyph("plus", 11)}</div>
        <div class="controls">
          <div class="cell">${glyph("tabMenu", 14, 12)}</div><div class="cell">${glyph("minimise", 12)}</div>
          <div class="cell">${glyph("restore", 12)}</div><div class="cell">${glyph("winClose", 13)}</div>
        </div>
      </div>
      <div class="tools">
        <div class="cell nav-cell">${glyph("back", 8, 14)}</div><div class="cell nav-cell">${glyph("forward", 8, 14)}</div>
        <div class="cell nav-cell">${glyph("reload", 14)}</div><div class="cell nav-cell">${glyph("gridDark", 14, 12)}</div>
        <div class="address">
          <div class="vpn">${fit("VPN", 18)}</div>${glyph("globe", 15)}<div class="split"></div>
          <div class="url">${fit("http://", 36)}<span class="host">${fit("localhost", 52)}</span>${fit(":1112/Account/Share.aspx", 149)}</div>
          <div class="badges">${glyph("zoomOut", 14)}<span class="count">${fit("0", 6.5)}</span>${glyph("shield", 13, 15)}<div class="heart">${glyph("heart", 16, 14)}</div></div>
        </div>
        <div class="cell ext first">${glyph("edit", 16)}</div><div class="cell ext">${glyph("idm", 16)}</div>
        <div class="cell ext"><span class="ae">${fit("æ", 15)}</span></div><div class="cell ext">${glyph("mail", 16, 14)}</div>
        <div class="bar"></div>
        <div class="cell ext">${glyph("downDark", 14, 13)}</div><div class="cell ext">${glyph("battery", 18, 10)}</div>
      </div>
      <div class="marks">
        ${BOOKMARKS.map(([icon, label, w, full]) => html`<div class="mark ${icon === "folder" ? "dim" : ""}" style="width:${full}px">
          ${glyph(icon, 16)}${label ? fit(label, w) : ""}</div>`)}
        <div class="more">${glyph("more", 10, 8)}</div>
      </div>`;
  }

  private page() {
    return html`<div class="page">
      <div class="welcome">${fit("Hoşgeldiniz :) huseyin", 183)}</div>
      <div class="menu">
        ${NAV.map(([t, w, full]) => html`<div class="btn" style="width:${full}px">${fit(t, w)}</div>`)}
        <div class="btn out">${fit("ÇIKIŞ", 37)}</div>
      </div>
      <div class="sub">${fit("Anketlerini Paylaş", 125)}</div>
      <div class="table">
        <div class="row head">${HEAD.map((c) => this.lines(c))}</div>
        ${ROWS.map((row, i) => html`<div class="row ${i % 2 ? "alt" : ""}">${row.map((c) => this.lines(c))}</div>`)}
      </div>
      <div class="credit">${fit("Created by Hüseyin Biçen", 177)}</div>
    </div>`;
  }

  private taskbar() {
    return html`<div class="taskbar">
      ${TASKS.map(([name, w, h, cell, state]) => html`<div class="cell task ${state}" style="width:${cell}px">${glyph(name, w, h)}</div>`)}
      <div class="tray">
        <div class="t10">${glyph("chevron", 12, 7)}</div><div class="t7">${glyph("taskBattery", 16, 12)}</div>
        <div class="t11">${glyph("volume", 17, 13)}</div><div class="t12">${glyph("wifi", 13)}</div>
        <div class="t12">${fit("TUR", 22)}</div><div class="t18">${fit("02:07", 27)}</div>
        <div class="t20">${glyph("notify", 17, 16)}</div><div class="edge"></div>
      </div>
    </div>`;
  }

  render() {
    return html`<div class="upper">${this.sidebar()}<div class="browser">${this.chrome()}${this.page()}</div></div>${this.taskbar()}`;
  }
}
